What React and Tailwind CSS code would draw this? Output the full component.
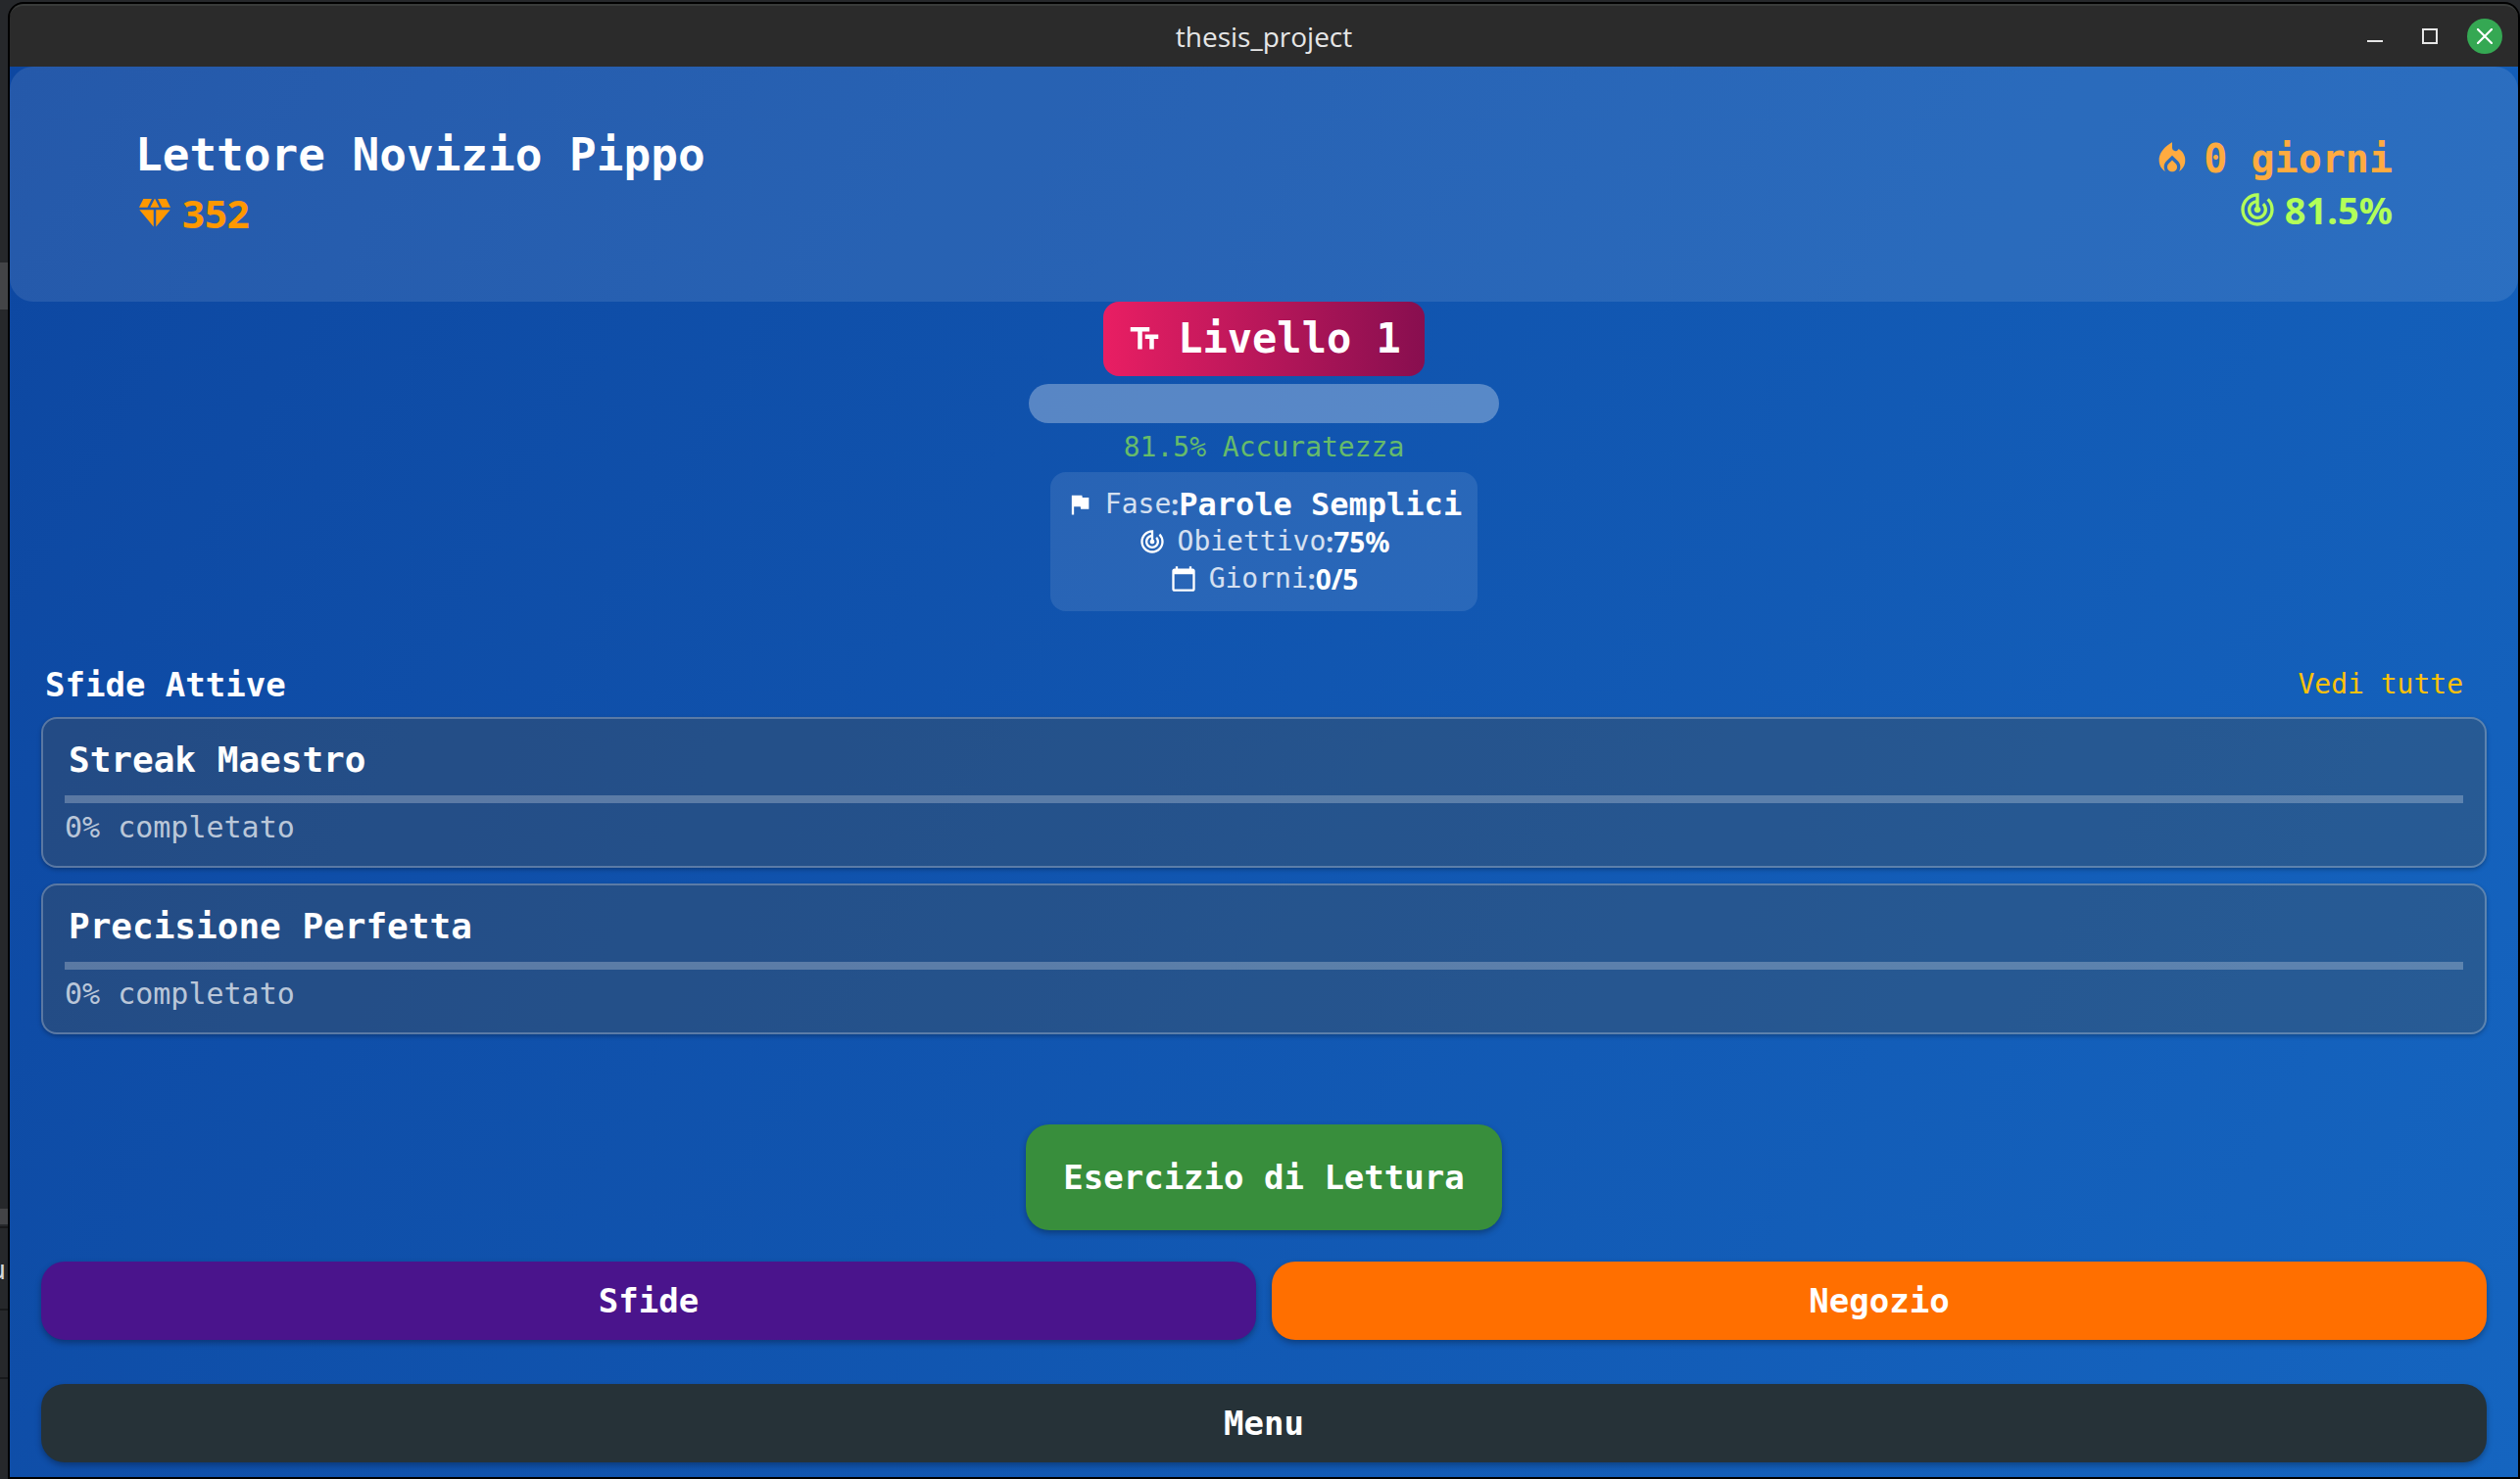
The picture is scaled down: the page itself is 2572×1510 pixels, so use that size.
import React from "react";
import {
  MdCalendarToday,
  MdDiamond,
  MdFlag,
  MdLocalFireDepartment,
  MdTextFields,
  MdTrackChanges,
} from "react-icons/md";

const challenges = [
  { title: "Streak Maestro", percent: 0 },
  { title: "Precisione Perfetta", percent: 0 },
];

const phaseInfo = [
  { Icon: MdFlag, label: "Fase", value: "Parole Semplici", wide: true },
  { Icon: MdTrackChanges, label: "Obiettivo", value: "75%" },
  { Icon: MdCalendarToday, label: "Giorni", value: "0/5" },
];

function TitleBar() {
  return (
    <div className="grid h-16 shrink-0 grid-cols-[1fr_auto_1fr] items-center rounded-t-[14px] border-t-2 border-[#393b3a] bg-[#2b2b2b] px-4">
      <span />
      <h1 className="font-['Open_Sans','Noto_Sans',sans-serif] text-[28px] leading-8 font-medium text-[#e6e6e6]">
        thesis_project
      </h1>
      <div className="flex items-center justify-end gap-5">
        <button aria-label="Riduci" className="flex size-9 items-center justify-center">
          <svg viewBox="0 0 16 16" className="size-4" fill="none" stroke="#e6e6e6" strokeWidth="2">
            <path d="M0 13h16" />
          </svg>
        </button>
        <button aria-label="Ingrandisci" className="flex size-9 items-center justify-center">
          <svg viewBox="0 0 16 16" className="size-4" fill="none" stroke="#e6e6e6" strokeWidth="2">
            <path d="M1 1h14v14H1z" />
          </svg>
        </button>
        <button
          aria-label="Chiudi"
          className="flex size-9 items-center justify-center rounded-full bg-[#35a853]"
        >
          <svg
            viewBox="0 0 16 16"
            className="size-4"
            fill="none"
            stroke="#fff"
            strokeWidth="2.2"
            strokeLinecap="round"
          >
            <path d="M1 1l14 14M15 1L1 15" />
          </svg>
        </button>
      </div>
    </div>
  );
}

function Header() {
  return (
    <header className="flex h-60 items-center justify-between rounded-3xl bg-white/10 px-32">
      <div>
        <h2 className="text-[46px] leading-[60px] font-bold">Lettore Novizio Pippo</h2>
        <p className="flex items-center gap-2 font-['Noto_Sans',sans-serif] text-[40px] leading-[60px] font-bold text-[#ff9800]">
          <MdDiamond className="size-10" />
          352
        </p>
      </div>
      <div className="flex flex-col items-end">
        <p className="flex items-center gap-3 text-[40px] leading-[52px] font-bold text-[#ffab40]">
          <MdLocalFireDepartment className="size-10" />0 giorni
        </p>
        <p className="flex items-center gap-2 font-['Noto_Sans',sans-serif] text-[38px] leading-[52px] font-bold text-[#b2ff59]">
          <MdTrackChanges className="size-10" />
          81.5%
        </p>
      </div>
    </header>
  );
}

function Level() {
  return (
    <section className="flex flex-col items-center">
      <div className="flex h-[76px] items-center gap-4 rounded-2xl bg-linear-to-r from-[#e91e63] to-[#880e4f] px-6 text-[42px] leading-[52px] font-bold">
        <MdTextFields className="size-9" />
        Livello 1
      </div>
      <div
        role="progressbar"
        aria-label="Progresso del livello"
        aria-valuenow={0}
        className="mt-2 h-10 w-[480px] rounded-full bg-white/30"
      />
      <p className="text-[28px] leading-[50px] text-[#66bb6a]">81.5% Accuratezza</p>
      <div className="rounded-2xl bg-white/10 px-4 py-[14px]">
        {phaseInfo.map(({ Icon, label, value, wide }) => (
          <p key={label} className="flex h-[38px] items-center justify-center text-[28px] leading-[38px]">
            <Icon className="mr-3 size-7" />
            <span className="text-white/80">{label}</span>
            <span className="font-['Noto_Sans',sans-serif] font-bold text-white/80">:</span>
            {wide ? (
              <strong className="text-[32px]">{value}</strong>
            ) : (
              <strong className="font-['Noto_Sans',sans-serif]">{value}</strong>
            )}
          </p>
        ))}
      </div>
    </section>
  );
}

function ChallengeCard({ title, percent }) {
  return (
    <article className="rounded-2xl border-2 border-white/25 bg-[rgba(80,79,66,0.32)] px-[22px] py-[22px] shadow-[0_2px_4px_rgba(0,0,0,0.25)]">
      <h3 className="pl-1 text-[36px] leading-10 font-bold">{title}</h3>
      <div role="progressbar" aria-label={title} aria-valuenow={percent} className="mt-4 h-2 bg-white/25">
        <div className="h-2 bg-[#ffc107]" style={{ width: `${percent}%` }} />
      </div>
      <p className="mt-2 text-[30px] leading-[34px] text-white/70">{percent}% completato</p>
    </article>
  );
}

const button =
  "rounded-3xl text-[34px] leading-10 font-bold text-white shadow-[0_3px_6px_rgba(0,0,0,0.3)]";

export default function App() {
  return (
    <div className="flex min-h-screen bg-[#26282b] font-['DejaVu_Sans_Mono',monospace] text-white">
      <div className="flex w-2 shrink-0 flex-col overflow-hidden">
        <div className="mt-[268px] h-12 bg-[#434447]" />
        <div className="mt-[918px] h-4 bg-[#434447]" />
        <div className="mt-0.5 h-0.5 bg-[#18191b]" />
        <div className="flex h-[82px] items-center justify-end pr-0.5 font-['Noto_Sans',sans-serif] text-[28px] text-[#d8d8d8]">
          u
        </div>
        <div className="h-0.5 bg-[#18191b]" />
        <div className="mt-[68px] h-0.5 bg-[#18191b]" />
      </div>
      <div className="mt-0.5 flex min-w-0 flex-1 flex-col rounded-t-2xl border-2 border-black bg-black">
        <TitleBar />
        <main className="flex flex-1 flex-col bg-[linear-gradient(119deg,#0d47a1,#1565c0)]">
          <Header />
          <Level />
          <section className="mt-10 px-8">
            <div className="flex h-[68px] items-center justify-between pt-0.5 pr-6 pl-1">
              <h2 className="text-[34px] leading-10 font-bold">Sfide Attive</h2>
              <a href="#sfide" className="text-[28px] leading-10 text-[#ffc107]">
                Vedi tutte
              </a>
            </div>
            <div className="flex flex-col gap-4">
              {challenges.map((c) => (
                <ChallengeCard key={c.title} {...c} />
              ))}
            </div>
          </section>
          <nav className="mt-[92px] flex flex-col px-8 pb-[15px]">
            <button className={`${button} h-[108px] self-center bg-[#388e3c] px-[38px]`}>
              Esercizio di Lettura
            </button>
            <div className="mt-8 grid grid-cols-2 gap-4">
              <button className={`${button} h-20 bg-[#4a148c]`}>Sfide</button>
              <button className={`${button} h-20 bg-[#ff6f00]`}>Negozio</button>
            </div>
            <button className={`${button} mt-[45px] h-20 bg-[#263238]`}>Menu</button>
          </nav>
        </main>
      </div>
    </div>
  );
}
